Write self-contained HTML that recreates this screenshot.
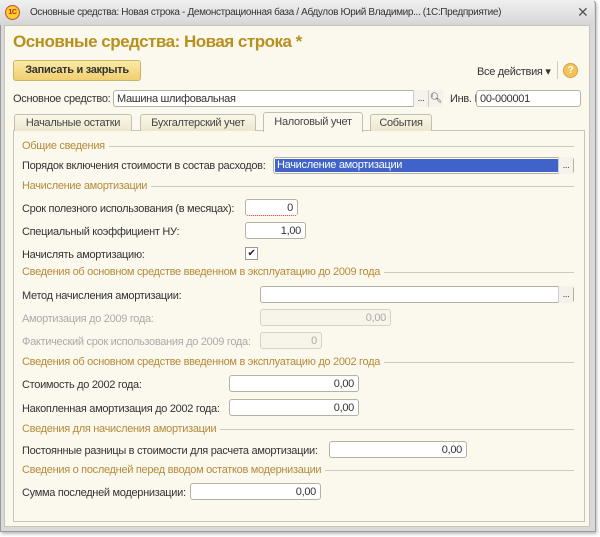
<!DOCTYPE html><html><head><meta charset="utf-8"><style>
*{margin:0;padding:0;box-sizing:border-box}
body{width:600px;height:537px;background:#fff;position:relative;overflow:hidden;font-family:"Liberation Sans","DejaVu Sans",sans-serif;font-size:11px;color:#333;letter-spacing:-0.3px}
.a{position:absolute;white-space:nowrap}
.win{position:absolute;left:0;top:0;width:596px;height:532px;border:1px solid #9a9a9a;background:#d9d9d9;border-radius:4px 4px 0 0;box-shadow:1px 2px 3px #bbb}
.title{position:absolute;left:0;top:0;width:594px;height:25px;background:linear-gradient(#f0f0f0,#d6d6d6)}
.body{position:absolute;left:4px;top:25px;width:586px;height:502px;background:#fbf9ee;border:1px solid #c9c6b8}
.panel{position:absolute;left:13px;top:130px;width:572px;height:392px;border:1px solid #c8c5b4;background:#fbf9ee}
.in{position:absolute;height:17px;background:#fff;border:1px solid #b6b2a2;border-radius:3px;text-align:right;padding:2px 4px 0;line-height:13px}
.dis{background:#f7f5ea;border-color:#d6d3c6;color:#aaa}
.sec{position:absolute;left:22px;right:26px;height:1px;color:#b58a3a}
.sec span{position:absolute;left:0;top:-6px;background:#fbf9ee;padding-right:4px;line-height:13px}
.sec i{position:absolute;left:0;right:0;top:0;border-top:1px solid #cfcbbb}
.tab{position:absolute;top:114px;height:17px;border:1px solid #c3bfae;border-bottom:none;border-radius:3px 3px 0 0;background:linear-gradient(#fbf8ea,#ece6cc);text-align:center;line-height:16px;color:#444}
.dots{position:absolute;width:15px;height:17px;border-left:1px solid #ccc;text-align:center;line-height:17px;font-size:9px;color:#333;background:#f4f2ea}
</style></head><body>
<div class="win"></div>
<div class="title"></div>
<div class="a" style="left:5px;top:5px;width:15px;height:15px;border-radius:50%;background:#f5d02a;border:1px solid #c44;color:#c22;font-size:7px;font-weight:bold;text-align:center;line-height:13px">1С</div>
<div class="a" style="left:30px;top:7px;color:#333;font-size:10px;letter-spacing:-0.35px">Основные средства: Новая строка - Демонстрационная база / Абдулов Юрий Владимир... (1С:Предприятие)</div>
<div class="a" style="left:577px;top:4px;font-size:14px;color:#555;font-weight:bold">✕</div>
<div class="body"></div>
<div class="a" style="left:13px;top:32px;font-size:17px;font-weight:bold;color:#b8901e;letter-spacing:-0.5px">Основные средства: Новая строка *</div>
<div class="a" style="left:13px;top:60px;width:128px;height:21px;border:1px solid #c9b56a;border-radius:3px;background:linear-gradient(#fbeaa8,#f0cf6e);font-weight:bold;text-align:center;line-height:19px;color:#333">Записать и закрыть</div>
<div class="a" style="left:477px;top:65px;color:#333">Все действия ▾</div>
<div class="a" style="left:557px;top:61px;height:18px;border-left:1px solid #ccc"></div>
<div class="a" style="left:563px;top:63px;width:15px;height:15px;border-radius:50%;background:#f4c25c;border:1px solid #d9a030;color:#fff;font-weight:bold;text-align:center;line-height:13px;font-size:10px">?</div>
<div class="a" style="left:13px;top:93px">Основное средство:</div>
<div class="in" style="left:113px;top:90px;width:330px;text-align:left;padding-left:3px">Машина шлифовальная</div>
<div class="dots" style="left:413px;top:90px">...</div>
<div class="dots" style="left:428px;top:90px;font-size:10px">🔍︎</div>
<div class="a" style="left:450px;top:93px">Инв. №:</div>
<div class="in" style="left:476px;top:90px;width:105px;text-align:left;padding-left:3px">00-000001</div>
<div class="panel"></div>
<div class="tab" style="left:14px;width:118px">Начальные остатки</div>
<div class="tab" style="left:140px;width:116px">Бухгалтерский учет</div>
<div class="tab" style="left:263px;width:100px;top:112px;height:20px;background:#fbf9ee;line-height:19px">Налоговый учет</div>
<div class="tab" style="left:370px;width:62px">События</div>
<div class="sec" style="top:146px"><i></i><span>Общие сведения</span></div>
<div class="a" style="left:22px;top:160px">Порядок включения стоимости в состав расходов:</div>
<div class="in" style="left:273px;top:157px;width:301px;padding:1px"><div style="width:284px;height:13px;background:#3f63c8;color:#fff;text-align:left;padding-left:2px">Начисление амортизации</div></div>
<div class="dots" style="left:558px;top:157px">...</div>
<div class="sec" style="top:186px"><i></i><span>Начисление амортизации</span></div>
<div class="a" style="left:22px;top:203px">Срок полезного использования (в месяцах):</div>
<div class="in" style="left:245px;top:199px;width:53px;border-bottom:1px dotted #d33">0</div>
<div class="a" style="left:22px;top:226px">Специальный коэффициент НУ:</div>
<div class="in" style="left:245px;top:222px;width:61px">1,00</div>
<div class="a" style="left:22px;top:249px">Начислять амортизацию:</div>
<div class="a" style="left:245px;top:247px;width:13px;height:13px;border:1px solid #999;background:#fff;font-size:10px;line-height:11px;text-align:center;color:#222">✔</div>
<div class="sec" style="top:272px"><i></i><span>Сведения об основном средстве введенном в эксплуатацию до 2009 года</span></div>
<div class="a" style="left:22px;top:290px">Метод начисления амортизации:</div>
<div class="in" style="left:260px;top:286px;width:314px"></div>
<div class="dots" style="left:558px;top:286px">...</div>
<div class="a" style="left:22px;top:313px;color:#aaa">Амортизация до 2009 года:</div>
<div class="in dis" style="left:260px;top:309px;width:131px">0,00</div>
<div class="a" style="left:22px;top:336px;color:#aaa">Фактический срок использования до 2009 года:</div>
<div class="in dis" style="left:260px;top:332px;width:62px">0</div>
<div class="sec" style="top:362px"><i></i><span>Сведения об основном средстве введенном в эксплуатацию до 2002 года</span></div>
<div class="a" style="left:22px;top:379px">Стоимость до 2002 года:</div>
<div class="in" style="left:229px;top:375px;width:130px">0,00</div>
<div class="a" style="left:22px;top:403px">Накопленная амортизация до 2002 года:</div>
<div class="in" style="left:229px;top:399px;width:130px">0,00</div>
<div class="sec" style="top:429px"><i></i><span>Сведения для начисления амортизации</span></div>
<div class="a" style="left:22px;top:445px">Постоянные разницы в стоимости для расчета амортизации:</div>
<div class="in" style="left:329px;top:441px;width:138px">0,00</div>
<div class="sec" style="top:470px"><i></i><span>Сведения о последней перед вводом остатков модернизации</span></div>
<div class="a" style="left:22px;top:487px">Сумма последней модернизации:</div>
<div class="in" style="left:190px;top:483px;width:131px">0,00</div>
</body></html>
